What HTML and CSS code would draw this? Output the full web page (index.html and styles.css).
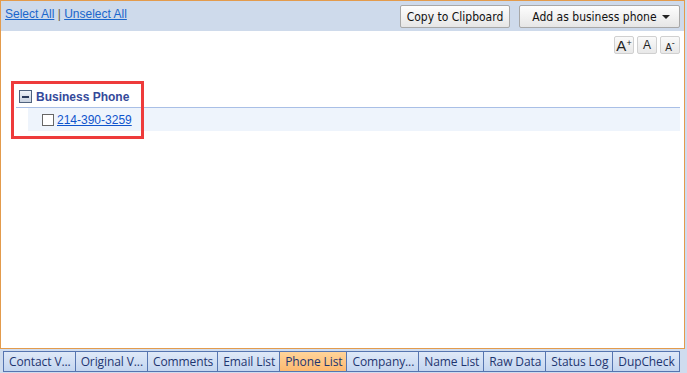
FILE: index.html
```html
<!DOCTYPE html>
<html lang="en">
<head>
    <meta charset="UTF-8">
    <title>Phone List</title>
    <link rel="stylesheet" href="styles.css">
</head>
<body>
    <div class="frame">
        <div class="panel">
            <div class="toolbar">
                <div class="select-links">
                    <a href="#">Select All</a> | <a href="#">Unselect All</a>
                </div>
                <div class="actions">
                    <button class="btn">Copy to Clipboard</button>
                    <button class="btn wide">Add as business phone <span class="caret"></span></button>
                </div>
            </div>

            <div class="font-tools">
                <button class="font-btn big">A<sup>+</sup></button>
                <button class="font-btn">A</button>
                <button class="font-btn small">A<sup>-</sup></button>
            </div>

            <div class="group">
                <div class="group-head">
                    <span class="collapse"></span>
                    <span class="group-title">Business Phone</span>
                </div>
                <div class="group-row">
                    <span class="check"></span>
                    <a href="#">214-390-3259</a>
                </div>
                <div class="highlight"></div>
            </div>
        </div>

        <div class="tabs">
            <div class="tab">Contact V...</div>
            <div class="tab">Original V...</div>
            <div class="tab">Comments</div>
            <div class="tab">Email List</div>
            <div class="tab active">Phone List</div>
            <div class="tab">Company...</div>
            <div class="tab">Name List</div>
            <div class="tab">Raw Data</div>
            <div class="tab">Status Log</div>
            <div class="tab">DupCheck</div>
        </div>
    </div>
</body>
</html>
```

FILE: styles.css
```css
body, html {
    margin: 0;
    height: 100%;
    background-color: #cfdcee;
    font-family: 'Liberation Sans', Arial, sans-serif;
    font-size: 12px;
}

.frame {
    height: 373px;
    display: flex;
    flex-direction: column;
}

.panel {
    position: relative;
    width: 683px;
    height: 347px;
    border: 1px solid #e39b4c;
    background-color: white;
}

.toolbar {
    height: 30px;
    background-color: #cedaeb;
    display: flex;
    justify-content: space-between;
    align-items: flex-start;
}

.select-links {
    padding: 6px 0 0 4px;
    color: #6b5a3a;
}

.select-links a {
    color: #1a66cc;
}

.actions {
    display: flex;
    gap: 9px;
    padding: 4px 4px 0 0;
}

.btn {
    height: 23px;
    padding: 0 6px;
    font-family: Tahoma, 'DejaVu Sans Condensed', 'Liberation Sans', sans-serif;
    font-size: 12px;
    color: #111;
    background: linear-gradient(#fdfdfd, #e6e6e6);
    border: 1px solid #a8a8a8;
    border-radius: 2px;
}

.btn.wide {
    padding: 0 9px 0 12px;
}

.caret {
    display: inline-block;
    width: 0;
    height: 0;
    margin-left: 2px;
    vertical-align: 2px;
    border-left: 4px solid transparent;
    border-right: 4px solid transparent;
    border-top: 4px solid #222;
}

.font-tools {
    display: flex;
    justify-content: flex-end;
    gap: 3px;
    padding: 5px 4px 0 0;
}

.font-btn {
    width: 20px;
    height: 18px;
    padding: 0;
    font-family: 'Liberation Sans', Arial, sans-serif;
    font-size: 12px;
    color: #222;
    background: linear-gradient(#fafafa, #e8e8e8);
    border: 1px solid #d0d0d0;
    border-radius: 2px;
}

.font-btn.big {
    font-size: 15px;
}

.font-btn.small {
    font-size: 10px;
}

.font-btn sup {
    font-size: 9px;
    vertical-align: 5px;
}

.group {
    position: relative;
    margin: 32px 4px 0 15px;
}

.group-head {
    display: flex;
    align-items: center;
    gap: 4px;
    height: 21px;
    padding-left: 3px;
    border-bottom: 1px solid #a9bfe6;
}

.collapse {
    position: relative;
    width: 11px;
    height: 11px;
    border: 1px solid #50637f;
    background: linear-gradient(#eef2f8, #c8d2e0);
}

.collapse::after {
    content: "";
    position: absolute;
    left: 2px;
    right: 2px;
    top: 5px;
    height: 2px;
    background-color: #2a3b5c;
}

.group-title {
    font-weight: bold;
    color: #34499a;
}

.group-row {
    display: flex;
    align-items: center;
    gap: 3px;
    height: 23px;
    margin-left: 12px;
    padding-left: 14px;
    background-color: #eef4fc;
}

.group-row a {
    color: #1055cc;
}

.check {
    width: 10px;
    height: 10px;
    border: 1px solid #666;
    background-color: white;
}

.highlight {
    position: absolute;
    left: -5px;
    top: -5px;
    width: 127px;
    height: 52px;
    border: 3px solid #ee3b3b;
}

.tabs {
    display: flex;
    margin: 2px 0 0 3px;
}

.tab {
    flex: none;
    white-space: nowrap;
    height: 19px;
    line-height: 19px;
    padding: 0 4px 0 5px;
    font-family: 'Open Sans', 'Noto Sans', sans-serif;
    font-size: 12px;
    letter-spacing: -0.1px;
    color: #1e3570;
    background: linear-gradient(#dfe9f8, #c4d6f0);
    border: 1px solid #5675b0;
    border-left: none;
}

.tab:first-child {
    border-left: 1px solid #5675b0;
}

.tab.active {
    background: linear-gradient(#ffd49a, #fdb970);
}
```
